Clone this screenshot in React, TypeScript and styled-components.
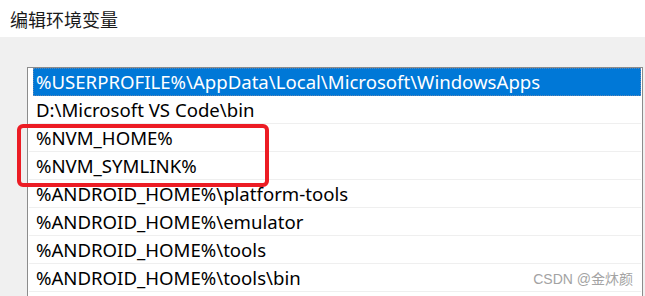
import styled, { createGlobalStyle } from "styled-components";

const GlobalStyle = createGlobalStyle`
  html, body {
    margin: 0;
    padding: 0;
    background: #f0f0f0;
  }
`;

const Window = styled.div`
  position: relative;
  width: 645px;
  height: 296px;
  overflow: hidden;
  background: #f0f0f0;
  font-family: "Noto Sans", "Noto Sans CJK SC", sans-serif;
`;

const TitleBar = styled.div`
  height: 37px;
  background: #ffffff;
  display: flex;
  align-items: center;
  padding-left: 10px;
  font-family: "Noto Sans CJK SC", sans-serif;
  font-size: 18px;
  color: #1a1a1a;
`;

const Body = styled.div`
  padding: 30px 2px 0 27px;
`;

const ListBox = styled.div`
  border: 1px solid #8c8c8c;
  border-bottom: none;
  background: #ffffff;
  padding: 0 1px;
  height: 240px;
`;

const Row = styled.div<{ selected?: boolean }>`
  box-sizing: border-box;
  height: 28px;
  display: flex;
  align-items: center;
  font-size: 18.6px;
  white-space: nowrap;
  color: ${({ selected }) => (selected ? "#ffffff" : "#000000")};
  background: ${({ selected }) => (selected ? "#0078d7" : "transparent")};
  border-bottom: 1px solid ${({ selected }) => (selected ? "#0078d7" : "#efefef")};
  padding-left: ${({ selected }) => (selected ? "3px" : "7px")};
  margin-left: ${({ selected }) => (selected ? "4px" : "0")};
  outline: ${({ selected }) => (selected ? "1px dotted #5d86b3" : "none")};
  outline-offset: -1px;
`;

const Highlight = styled.div`
  position: absolute;
  left: 17px;
  top: 124px;
  width: 244px;
  height: 55px;
  border: 4px solid #ec1c24;
  border-radius: 6px;
`;

const Watermark = styled.div`
  position: absolute;
  right: 12px;
  top: 268px;
  font-family: "Liberation Sans", "Noto Sans CJK SC", sans-serif;
  font-size: 14px;
  color: #a3a3a3;
`;

const paths = [
  "%USERPROFILE%\\AppData\\Local\\Microsoft\\WindowsApps",
  "D:\\Microsoft VS Code\\bin",
  "%NVM_HOME%",
  "%NVM_SYMLINK%",
  "%ANDROID_HOME%\\platform-tools",
  "%ANDROID_HOME%\\emulator",
  "%ANDROID_HOME%\\tools",
  "%ANDROID_HOME%\\tools\\bin",
  "",
];

export default function App() {
  return (
    <>
      <GlobalStyle />
      <Window>
        <TitleBar>编辑环境变量</TitleBar>
        <Body>
          <ListBox>
            {paths.map((p, i) => (
              <Row key={i} selected={i === 0}>
                {p}
              </Row>
            ))}
          </ListBox>
        </Body>
        <Highlight />
        <Watermark>CSDN @金炑颜</Watermark>
      </Window>
    </>
  );
}
